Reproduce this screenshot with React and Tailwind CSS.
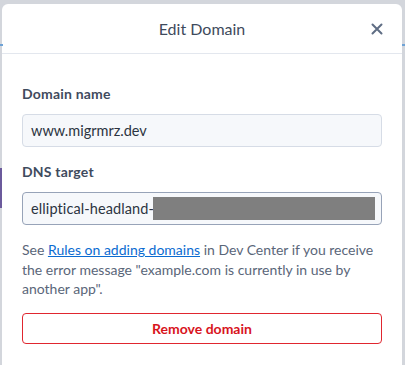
export default function App() {
  const font = { fontFamily: 'Lato, "Noto Sans", sans-serif' };
  return (
    <div className="w-[405px] h-[365px] bg-[#d3d6dc] overflow-hidden relative" style={font}>
      <div className="absolute left-0 top-[44px] w-[3px] h-[2px] bg-[#6fa3d6]" />
      <div className="absolute right-0 top-[44px] w-[3px] h-[2px] bg-[#6fa3d6]" />
      <div className="absolute left-0 top-[168px] w-[2px] h-[40px] bg-[#6b5a9c]" />
      <div className="ml-[2px] mr-[3px] mt-[4px] h-[400px] bg-white rounded-t-[6px] flex flex-col">
        <div className="h-[50px] border-b border-[#e3e7ee] flex items-center justify-center relative">
          <span className="text-[16px] text-[#3e4a5c]">Edit Domain</span>
          <button className="absolute right-[17px] top-[17px] w-[16px] h-[16px] flex items-center justify-center">
            <svg width="12" height="12" viewBox="0 0 12 12">
              <path d="M1.5 1.5 L10.5 10.5 M10.5 1.5 L1.5 10.5" stroke="#5f6d84" strokeWidth="2" strokeLinecap="round" />
            </svg>
          </button>
        </div>
        <div className="px-[20px] pt-[31px] flex flex-col">
          <label className="text-[14px] font-bold text-[#3f4b5e] leading-[18px] tracking-[0.2px]">Domain name</label>
          <div className="mt-[11px] h-[33px] rounded-[4px] border border-[#d6dce6] bg-[#f6f8fb] flex items-center px-[8px] text-[14.5px] text-[#2c3441]">
            www.migrmrz.dev
          </div>
          <label className="mt-[16px] text-[14px] font-bold text-[#3f4b5e] leading-[18px] tracking-[0.2px]">DNS target</label>
          <div className="mt-[11px] h-[33px] rounded-[4px] border border-[#97a3b8] bg-[#f6f8fb] flex items-center pl-[8px] pr-[6px] text-[14.5px] text-[#2c3441] tracking-[0.1px]">
            <span>elliptical-headland-</span>
            <span className="ml-[-1px] flex-1 h-[23px] bg-[#7f7f7f]" />
          </div>
          <p className="mt-[15px] text-[14px] leading-[19.5px] text-[#5a6679]">
            See <a className="text-[#0b6bd1] underline">Rules on adding domains</a> in Dev Center if you receive the error message "example.com is currently in use by another app".
          </p>
          <button className="mt-[14px] h-[31px] rounded-[4px] border border-[#e0262f] text-[#d8141d] text-[14px] font-bold flex items-center justify-center">
            Remove domain
          </button>
        </div>
      </div>
    </div>
  );
}
